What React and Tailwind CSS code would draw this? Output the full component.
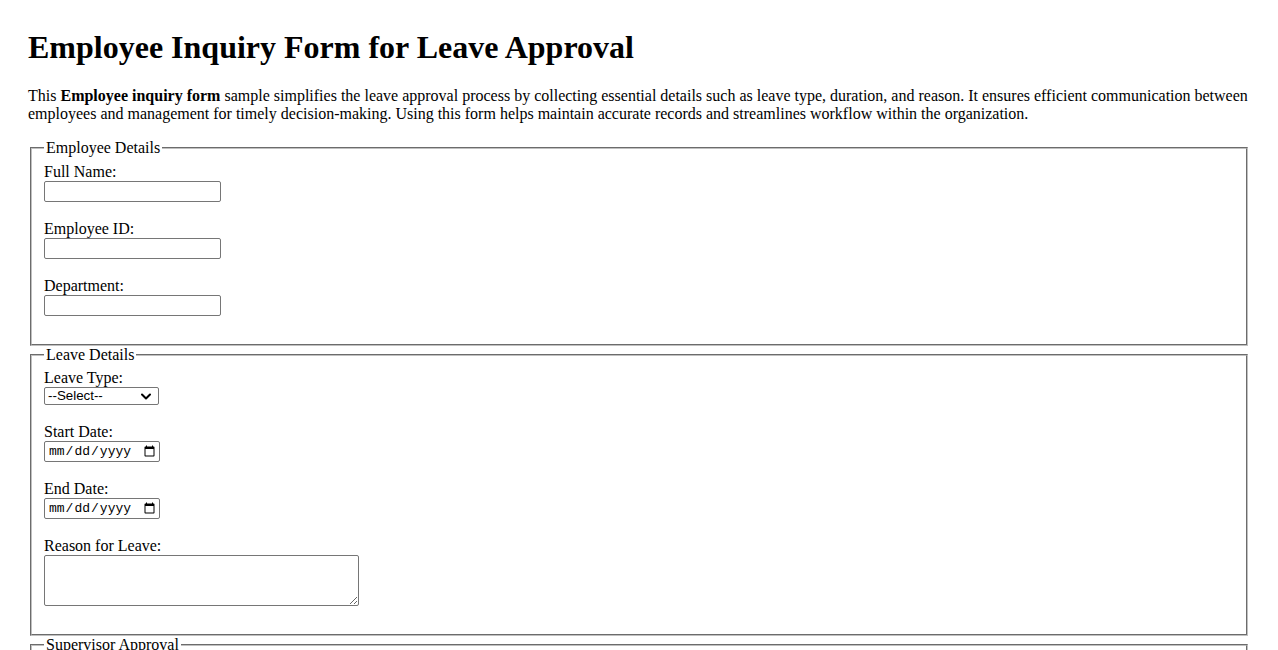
import { useState } from 'react';

const inputCls =
  "w-[177px] h-[21px] border border-[#767676] rounded-[2px] px-[2px] text-[13.33px] font-['Liberation_Sans',Arial,sans-serif] align-bottom bg-white";

const Fieldset = ({ legend, children }) => (
  <fieldset className="mx-[2px] px-3 pt-[5.6px] pb-[10px] border-2 [border-style:groove] border-[#c0c0c0] min-w-0">
    <legend className="px-[2px]">{legend}</legend>
    {children}
  </fieldset>
);

const Field = ({ label, children }) => (
  <>
    <label>{label}</label>
    <br />
    {children}
    <br />
    <br />
  </>
);

const DateInput = () => (
  <input
    type="date"
    className="w-[116px] h-[21px] border border-[#767676] rounded-[2px] pl-[3px] pr-[1px] text-[13px] font-['Liberation_Mono',monospace] align-bottom bg-white"
  />
);

const SelectBox = ({ value, onChange, options }) => (
  <span className="inline-flex items-center w-[115px] h-[18px] border border-[#767676] rounded-[2px] bg-white align-bottom">
    <select
      value={value}
      onChange={(e) => onChange(e.target.value)}
      className="appearance-none flex-1 min-w-0 h-full pl-[3px] text-[13.33px] leading-none font-['Liberation_Sans',Arial,sans-serif] outline-none"
    >
      {options.map((o) => (
        <option key={o}>{o}</option>
      ))}
    </select>
    <svg width="10" height="7" viewBox="0 0 10 7" className="mr-[7px] shrink-0 pointer-events-none">
      <path d="M1 1.5 L5 5.5 L9 1.5" stroke="#000" strokeWidth="2" fill="none" strokeLinecap="round" strokeLinejoin="round" />
    </svg>
  </span>
);

export default function App() {
  const [leaveType, setLeaveType] = useState('--Select--');
  const [status, setStatus] = useState('--Select--');

  return (
    <div className="bg-white text-black min-h-screen font-['Liberation_Serif','Times_New_Roman',serif] text-base leading-[normal] px-[28px] pt-[8px] pb-8">
      <h1 className="text-[32px] font-bold mt-[21.44px] mb-[20.5px]">Employee Inquiry Form for Leave Approval</h1>
      <p className="my-4">
        This <strong>Employee inquiry form</strong> sample simplifies the leave approval process by collecting essential
        details such as leave type, duration, and reason. It ensures efficient communication between employees and
        management for timely decision-making. Using this form helps maintain accurate records and streamlines workflow
        within the organization.
      </p>

      <form onSubmit={(e) => e.preventDefault()}>
        <Fieldset legend="Employee Details">
          <Field label="Full Name:">
            <input type="text" className={inputCls} />
          </Field>
          <Field label="Employee ID:">
            <input type="text" className={inputCls} />
          </Field>
          <Field label="Department:">
            <input type="text" className={inputCls} />
          </Field>
        </Fieldset>

        <Fieldset legend="Leave Details">
          <Field label="Leave Type:">
            <SelectBox
              value={leaveType}
              onChange={setLeaveType}
              options={['--Select--', 'Sick Leave', 'Casual Leave', 'Annual Leave', 'Unpaid Leave']}
            />
          </Field>
          <Field label="Start Date:">
            <DateInput />
          </Field>
          <Field label="End Date:">
            <DateInput />
          </Field>
          <Field label="Reason for Leave:">
            <textarea className="w-[315px] h-[51px] border border-[#767676] rounded-[2px] p-[2px] text-[13px] font-['Liberation_Mono',monospace] align-bottom resize" />
          </Field>
        </Fieldset>

        <Fieldset legend="Supervisor Approval">
          <Field label="Supervisor Name:">
            <input type="text" className={inputCls} />
          </Field>
          <Field label="Approval Status:">
            <SelectBox
              value={status}
              onChange={setStatus}
              options={['--Select--', 'Approved', 'Rejected', 'Pending']}
            />
          </Field>
          <Field label="Comments:">
            <textarea className="w-[315px] h-[51px] border border-[#767676] rounded-[2px] p-[2px] text-[13px] font-['Liberation_Mono',monospace] align-bottom resize" />
          </Field>
        </Fieldset>

        <br />
        <button
          type="submit"
          className="border border-[#767676] rounded-[2px] bg-[#efefef] px-[6px] py-[1px] text-[13.33px] font-['Liberation_Sans',Arial,sans-serif]"
        >
          Submit Request
        </button>
      </form>
    </div>
  );
}
